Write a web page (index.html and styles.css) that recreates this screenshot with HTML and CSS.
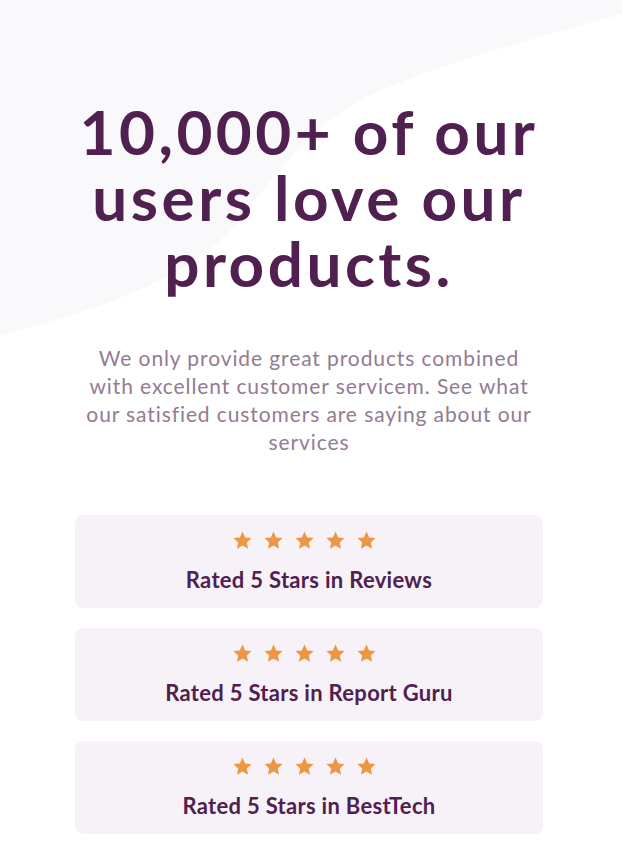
FILE: index.html
```html
<!DOCTYPE html>
<html lang="en">
<head>
<meta charset="utf-8">
<title>Social proof section</title>
<link rel="stylesheet" href="styles.css">
</head>
<body>
<main class="page">
  <svg class="bg-shape" width="622" height="340" viewBox="0 0 622 340" aria-hidden="true"><path d="M0 0H622V14C540 36 440 64 370 95C310 125 280 170 235 225C195 272 120 305 0 335Z" fill="#f9f8fa"/></svg>
  <section class="intro">
    <h1 class="title">10,000+ of our users love our products.</h1>
    <p class="lead">We only provide great products combined with excellent customer servicem. See what our satisfied customers are saying about our services</p>
  </section>

  <section class="ratings">
    <div class="rating">
      <div class="stars">
        <svg width="19" height="18" viewBox="0 0 18 17"><path d="M9 .5L11.53 6.02 17.56 6.72 13.09 10.83 14.29 16.78 9 13.8 3.71 16.78 4.91 10.83 .44 6.72 6.47 6.02Z" fill="#ee9644"/></svg>
        <svg width="19" height="18" viewBox="0 0 18 17"><path d="M9 .5L11.53 6.02 17.56 6.72 13.09 10.83 14.29 16.78 9 13.8 3.71 16.78 4.91 10.83 .44 6.72 6.47 6.02Z" fill="#ee9644"/></svg>
        <svg width="19" height="18" viewBox="0 0 18 17"><path d="M9 .5L11.53 6.02 17.56 6.72 13.09 10.83 14.29 16.78 9 13.8 3.71 16.78 4.91 10.83 .44 6.72 6.47 6.02Z" fill="#ee9644"/></svg>
        <svg width="19" height="18" viewBox="0 0 18 17"><path d="M9 .5L11.53 6.02 17.56 6.72 13.09 10.83 14.29 16.78 9 13.8 3.71 16.78 4.91 10.83 .44 6.72 6.47 6.02Z" fill="#ee9644"/></svg>
        <svg width="19" height="18" viewBox="0 0 18 17"><path d="M9 .5L11.53 6.02 17.56 6.72 13.09 10.83 14.29 16.78 9 13.8 3.71 16.78 4.91 10.83 .44 6.72 6.47 6.02Z" fill="#ee9644"/></svg>
      </div>
      <p class="rating-text">Rated 5 Stars in Reviews</p>
    </div>
    <div class="rating">
      <div class="stars">
        <svg width="19" height="18" viewBox="0 0 18 17"><path d="M9 .5L11.53 6.02 17.56 6.72 13.09 10.83 14.29 16.78 9 13.8 3.71 16.78 4.91 10.83 .44 6.72 6.47 6.02Z" fill="#ee9644"/></svg>
        <svg width="19" height="18" viewBox="0 0 18 17"><path d="M9 .5L11.53 6.02 17.56 6.72 13.09 10.83 14.29 16.78 9 13.8 3.71 16.78 4.91 10.83 .44 6.72 6.47 6.02Z" fill="#ee9644"/></svg>
        <svg width="19" height="18" viewBox="0 0 18 17"><path d="M9 .5L11.53 6.02 17.56 6.72 13.09 10.83 14.29 16.78 9 13.8 3.71 16.78 4.91 10.83 .44 6.72 6.47 6.02Z" fill="#ee9644"/></svg>
        <svg width="19" height="18" viewBox="0 0 18 17"><path d="M9 .5L11.53 6.02 17.56 6.72 13.09 10.83 14.29 16.78 9 13.8 3.71 16.78 4.91 10.83 .44 6.72 6.47 6.02Z" fill="#ee9644"/></svg>
        <svg width="19" height="18" viewBox="0 0 18 17"><path d="M9 .5L11.53 6.02 17.56 6.72 13.09 10.83 14.29 16.78 9 13.8 3.71 16.78 4.91 10.83 .44 6.72 6.47 6.02Z" fill="#ee9644"/></svg>
      </div>
      <p class="rating-text">Rated 5 Stars in Report Guru</p>
    </div>
    <div class="rating">
      <div class="stars">
        <svg width="19" height="18" viewBox="0 0 18 17"><path d="M9 .5L11.53 6.02 17.56 6.72 13.09 10.83 14.29 16.78 9 13.8 3.71 16.78 4.91 10.83 .44 6.72 6.47 6.02Z" fill="#ee9644"/></svg>
        <svg width="19" height="18" viewBox="0 0 18 17"><path d="M9 .5L11.53 6.02 17.56 6.72 13.09 10.83 14.29 16.78 9 13.8 3.71 16.78 4.91 10.83 .44 6.72 6.47 6.02Z" fill="#ee9644"/></svg>
        <svg width="19" height="18" viewBox="0 0 18 17"><path d="M9 .5L11.53 6.02 17.56 6.72 13.09 10.83 14.29 16.78 9 13.8 3.71 16.78 4.91 10.83 .44 6.72 6.47 6.02Z" fill="#ee9644"/></svg>
        <svg width="19" height="18" viewBox="0 0 18 17"><path d="M9 .5L11.53 6.02 17.56 6.72 13.09 10.83 14.29 16.78 9 13.8 3.71 16.78 4.91 10.83 .44 6.72 6.47 6.02Z" fill="#ee9644"/></svg>
        <svg width="19" height="18" viewBox="0 0 18 17"><path d="M9 .5L11.53 6.02 17.56 6.72 13.09 10.83 14.29 16.78 9 13.8 3.71 16.78 4.91 10.83 .44 6.72 6.47 6.02Z" fill="#ee9644"/></svg>
      </div>
      <p class="rating-text">Rated 5 Stars in BestTech</p>
    </div>
  </section>
</main>
</body>
</html>
```

FILE: styles.css
```css
* { box-sizing: border-box; }

html, body {
  margin: 0;
  padding: 0;
  background: #ffffff;
}

body {
  font-family: "Lato", "Open Sans", sans-serif;
}

.page {
  position: relative;
  display: flex;
  flex-direction: column;
  align-items: center;
  padding: 98px 4px 80px 0;
  overflow: hidden;
}

.bg-shape {
  position: absolute;
  top: 0;
  left: 0;
  z-index: 0;
}

.intro, .ratings {
  position: relative;
  z-index: 1;
}

.intro {
  display: flex;
  flex-direction: column;
  align-items: center;
  text-align: center;
}

.title {
  margin: 0;
  width: 520px;
  font-size: 62px;
  line-height: 66px;
  font-weight: 700;
  color: #502050;
  letter-spacing: 3.5px;
}

.lead {
  margin: 48px 0 0;
  width: 452px;
  font-size: 21px;
  line-height: 28px;
  letter-spacing: 0.9px;
  color: #937b92;
}

.ratings {
  display: flex;
  flex-direction: column;
  gap: 20px;
  margin-top: 59px;
  width: 468px;
}

.rating {
  display: flex;
  flex-direction: column;
  align-items: center;
  height: 93px;
  padding-top: 16px;
  background: #f7f2f7;
  border-radius: 8px;
}

.stars {
  display: flex;
  gap: 12px;
  margin-right: 9px;
}

.stars svg { display: block; }

.rating-text {
  margin: 18px 0 0;
  font-size: 22px;
  line-height: 26px;
  font-weight: 700;
  letter-spacing: 0.3px;
  color: #502050;
}
```
